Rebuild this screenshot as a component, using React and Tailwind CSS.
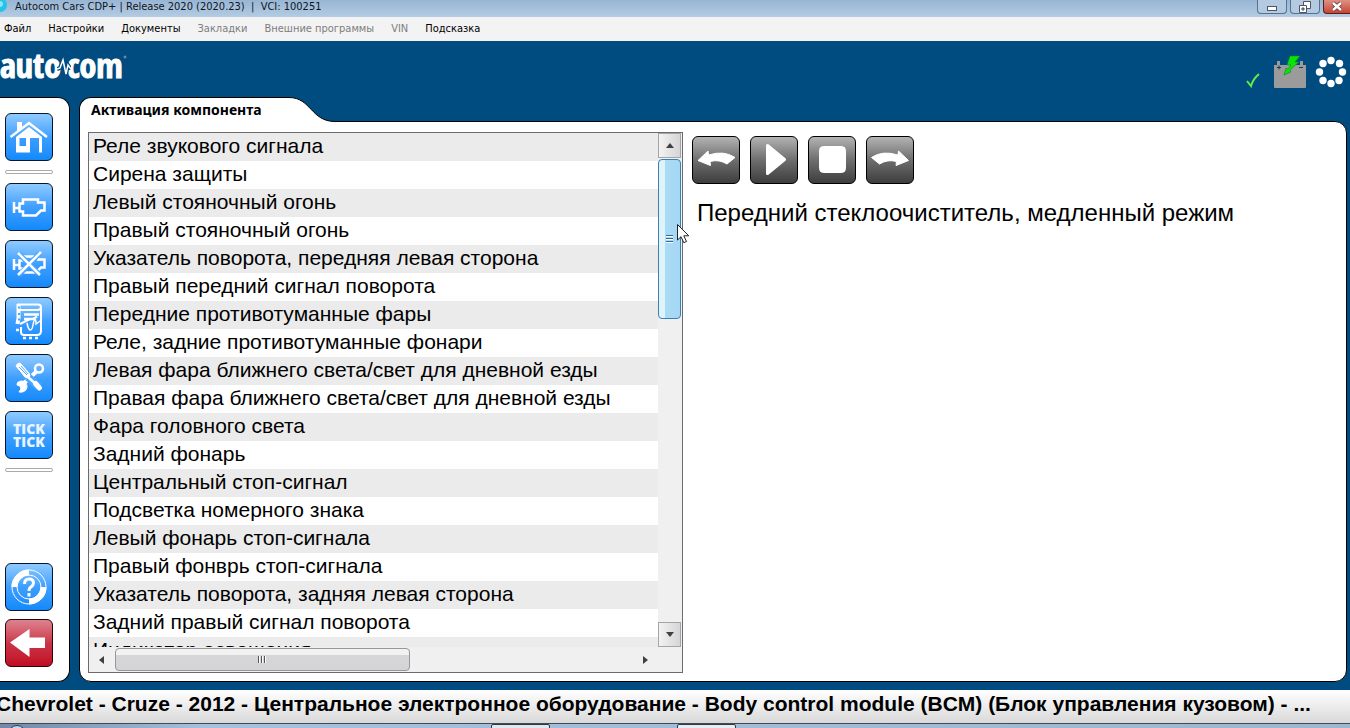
import React, { useState } from 'react';

const MENU = [
  { label: 'Файл' },
  { label: 'Настройки' },
  { label: 'Документы' },
  { label: 'Закладки', disabled: true },
  { label: 'Внешние программы', disabled: true },
  { label: 'VIN', disabled: true },
  { label: 'Подсказка' },
];

const COMPONENTS = [
  'Реле звукового сигнала',
  'Сирена защиты',
  'Левый стояночный огонь',
  'Правый стояночный огонь',
  'Указатель поворота, передняя левая сторона',
  'Правый передний сигнал поворота',
  'Передние противотуманные фары',
  'Реле, задние противотуманные фонари',
  'Левая фара ближнего света/свет для дневной езды',
  'Правая фара ближнего света/свет для дневной езды',
  'Фара головного света',
  'Задний фонарь',
  'Центральный стоп-сигнал',
  'Подсветка номерного знака',
  'Левый фонарь стоп-сигнала',
  'Правый фонврь стоп-сигнала',
  'Указатель поворота, задняя левая сторона',
  'Задний правый сигнал поворота',
  'Индикатор освещения',
];

const ENGINE = 'M8 18v11M8 24h6M17 15.500h15v3h6.500v8H35l-5 5H17v-4h-3.500v-8H17z';

function TitleBar() {
  return (
    <header className="flex h-[17px] shrink-0 items-start justify-between overflow-hidden bg-gradient-to-b from-[#98b5d4] to-[#b3cce3]">
      <div className="flex items-start">
        <svg viewBox="0 0 15 14" className="h-[14px] w-[15px]">
          <circle cx="0" cy="5" r="7" fill="#22c4ea" />
          <circle cx="0" cy="4" r="3" fill="#8be6f8" />
        </svg>
        <h1 className="whitespace-pre font-['DejaVu_Sans_Condensed','DejaVu_Sans',sans-serif] text-[11px] leading-[13px] text-[#10151c]">
          Autocom Cars CDP+ | Release 2020 (2020.23)  |  VCI: 100251
        </h1>
      </div>
      <div className="flex gap-[3px]">
        <button aria-label="Свернуть" className="flex h-[14px] w-[30px] items-center justify-center rounded-b border border-t-0 border-[#56718f] bg-[#b4cae1]">
          <svg viewBox="0 0 12 12" className="size-3"><rect x="1.500" y="5.500" width="9" height="4" fill="#fff" stroke="#4c5766" /></svg>
        </button>
        <button aria-label="Восстановить" className="flex h-[14px] w-[30px] items-center justify-center rounded-b border border-t-0 border-[#56718f] bg-[#b4cae1]">
          <svg viewBox="0 0 12 12" className="size-3" fill="#fff" stroke="#4c5766">
            <path d="M4.500 .5h7v7h-7z" />
            <path d="M.5 4.500h7v7h-7zM3 7h2v2H3z" fillRule="evenodd" />
          </svg>
        </button>
        <button aria-label="Закрыть" className="flex h-[14px] w-[27px] items-center justify-center rounded-bl border border-t-0 border-r-0 border-[#5a1d1a] bg-gradient-to-b from-[#dc9184] to-[#c64331]">
          <svg viewBox="0 0 12 12" className="size-3"><path d="M2 2l8 7M10 2l-8 7" stroke="#5c3535" strokeWidth="4" /><path d="M2 2l8 7M10 2l-8 7" stroke="#fff" strokeWidth="2.500" /></svg>
        </button>
      </div>
    </header>
  );
}

function MenuBar() {
  return (
    <nav className="flex h-6 shrink-0 items-center gap-[17px] bg-[#f3f3f3] pl-1 font-['DejaVu_Sans_Condensed','DejaVu_Sans',sans-serif] text-[11px]">
      {MENU.map((item) => (
        <button key={item.label} disabled={item.disabled} className="text-black disabled:text-[#7d7d7d]">
          {item.label}
        </button>
      ))}
    </nav>
  );
}

function Brand() {
  return (
    <div className="flex shrink-0 items-center self-start pt-2 font-['Open_Sans_Condensed','Liberation_Sans_Narrow','Liberation_Sans',sans-serif] text-[34px] leading-8 font-bold text-white [-webkit-text-stroke:1px_white]">
      <span>auto</span>
      <svg viewBox="0 0 14 20" className="z-10 -mx-1 mt-1 h-5 w-[14px]" fill="none">
        <path d="M0 12l3-1 3-8 3 14 2-9 3 4" stroke="#004c80" strokeWidth="4" />
        <path d="M0 12l3-1 3-8 3 14 2-9 3 4" stroke="#fff" strokeWidth="1.500" />
      </svg>
      <span>com</span>
      <svg viewBox="0 0 4 4" className="mb-4 size-1"><circle cx="2" cy="2" r="1" fill="none" stroke="#9cc3e0" strokeWidth=".7" /></svg>
    </div>
  );
}

function StatusIcons() {
  return (
    <div className="flex items-center gap-2 pt-[6px] pr-[3px]">
      <svg viewBox="0 0 16 16" className="mt-4 size-4"><path d="M2 9l4 5Q8 7 14 2" fill="none" stroke="#5df04a" strokeWidth="2" /></svg>
      <svg viewBox="0 0 34 34" className="ml-1 size-[34px]">
        <path d="M1 10h3V6h3v4h20V6h3v4h3v22q0 1-1 1H2q-1 0-1-1z" fill="#9b9b9b" />
        <path d="M4 12.500h4M6 10.500v4M26 12.500h4" stroke="#22394a" />
        <path d="M17 1h10l-5 6h4l-9 8 1 2-7 3 2-7 2 1 3-4h-4z" fill="#08e408" stroke="#087b20" strokeWidth=".5" />
      </svg>
      <svg viewBox="0 0 32 32" className="size-8" fill="#fff">
        <circle cx="16" cy="4.500" r="3.700" /><circle cx="24.500" cy="7.500" r="3.700" />
        <circle cx="27.500" cy="16" r="3.700" /><circle cx="24" cy="24.500" r="3.700" />
        <circle cx="16" cy="27.500" r="3.700" /><circle cx="8" cy="24.500" r="3.700" />
        <circle cx="4.500" cy="16" r="3.700" /><circle cx="8" cy="7.500" r="3.700" />
      </svg>
    </div>
  );
}

function SideButton({ label, red, children }) {
  return (
    <button
      aria-label={label}
      className={
        red
          ? 'flex size-12 items-center justify-center rounded-md border border-[#2b0508] bg-gradient-to-b from-[#dc8290] via-[#cb3349] to-[#c10a20]'
          : 'flex size-12 items-center justify-center rounded-md border border-[#06162c] bg-gradient-to-b from-[#8fcaff] via-[#3d9fff] to-[#1189fb]'
      }
    >
      {children}
    </button>
  );
}

function Icon({ children }) {
  return (
    <svg viewBox="0 0 46 46" className="size-full" fill="none" stroke="#fff" strokeWidth="3">
      {children}
    </svg>
  );
}

function Divider() {
  return <hr className="h-1 w-12 rounded-full border border-[#aaaaaa] bg-white" />;
}

function Sidebar() {
  return (
    <aside className="flex w-[70px] shrink-0 flex-col rounded-r-xl border border-l-0 border-black bg-white pt-[15px] pb-[14px] pl-[5px]">
      <div className="flex flex-col gap-[9px]">
        <SideButton label="Главная">
          <Icon>
            <path d="M4.500 23L23 9l18 14" strokeWidth="2.500" />
            <path d="M11 8h5v5l-5 4z" fill="#fff" stroke="none" />
            <path d="M23 13L10 23v15.500h14V24h9v14.500h3V23zM13.500 24h6.500v8h-6.500z" fill="#fff" fillRule="evenodd" stroke="none" />
          </Icon>
        </SideButton>
        <Divider />
        <SideButton label="Двигатель">
          <Icon><path d={ENGINE} strokeWidth="2.500" /></Icon>
        </SideButton>
        <SideButton label="Стирание ошибок">
          <Icon>
            <path d={ENGINE} strokeWidth="2.500" />
            <path d="M13 13l20 20M34 12L13 34" stroke="#48a5ff" strokeWidth="5" />
            <path d="M12 12l22 22M35 11L12 34" strokeWidth="2.500" />
          </Icon>
        </SideButton>
        <SideButton label="Данные">
          <Icon>
            <path d="M12 6.500h20q3 0 3 2.500t-3 3H12z" strokeWidth="2" />
            <path d="M12.500 6v14l-1 6" strokeWidth="4" />
            <path d="M35 10v23q0 4-4 4H18q-3 0-3-3v-5" strokeWidth="2" />
            <path d="M18 16.500h15M18 21h9l4-2.500" strokeWidth="2.500" />
            <path d="M14 26l10-5" strokeWidth="2" />
            <path d="M21 25c2 10 5 8 6 2s3-8 3-1l4-3" strokeWidth="1.500" />
            <path d="M17 40h3M23 40h3M29 40h3M10 32h3" strokeWidth="2.500" />
            <path d="M13 8.500v2M13 15v2M13 20.500v2" stroke="#4ca7ff" strokeWidth="2" />
          </Icon>
        </SideButton>
        <SideButton label="Инструменты">
          <Icon>
            <path d="M17 29L30 17" strokeWidth="4" />
            <circle cx="33" cy="13.500" r="4" strokeWidth="2.500" />
            <path d="M11 30l3 1 1 3-2 3q7 1 8-5 0-6-6-6-5 1-4 4z" fill="#fff" strokeWidth="1" />
            <path d="M14 14l8 8M22 22l11 10" stroke="#4ba6ff" strokeWidth="8" />
            <path d="M10 11q1-3 4-3l9 10 1 3-2 2-3-1z" fill="#fff" strokeWidth="1" />
            <path d="M13 12l8 8M15 11l7 8" stroke="#58acff" strokeWidth="1" />
            <path d="M22 22l10 9" strokeWidth="2.500" />
            <path d="M29.500 28.500l4 4.500" strokeWidth="5" strokeLinecap="round" />
          </Icon>
        </SideButton>
        <SideButton label="Tick Tick">
          <span className="font-['Open_Sans','Noto_Sans',sans-serif] text-[14px] leading-[13px] font-extrabold text-[#e8f5ff]">
            TICK<br />TICK
          </span>
        </SideButton>
        <Divider />
      </div>
      <div className="mt-auto flex flex-col gap-2">
        <SideButton label="Справка">
          <Icon>
            <circle cx="23" cy="23" r="17" strokeWidth="1" />
            <circle cx="23" cy="23" r="12" strokeWidth="1" />
            <path d="M8.500 23A14.500 14.500 0 0 1 23 8.500M37.500 23A14.500 14.500 0 0 1 23 37.500" strokeWidth="6" />
            <path d="M18.500 20q0-5 4.500-5t4.500 4q0 2-2.500 4-2 1-2 4M23 29v3.500" strokeWidth="3" />
          </Icon>
        </SideButton>
        <SideButton label="Назад" red>
          <Icon><path d="M4 22.500L23.500 9v8.500H39v10.500H23.500v9z" fill="#fff" stroke="none" /></Icon>
        </SideButton>
      </div>
    </aside>
  );
}

function ComponentList({ selected, onSelect }) {
  return (
    <section className="flex w-[47.6%] shrink-0 border border-[#6b6b6b] bg-[#f0f0f0]">
      <div className="flex min-w-0 flex-1 flex-col">
        <ul className="min-h-0 flex-1 overflow-hidden bg-white">
          {COMPONENTS.map((name) => (
            <li key={name} className="h-7 odd:bg-[#ebebeb]">
              <button
                aria-pressed={selected === name}
                onClick={() => onSelect(name)}
                className="block w-full pl-1 text-left text-[21px] leading-[26px] whitespace-nowrap text-black"
              >
                {name}
              </button>
            </li>
          ))}
        </ul>
        <div className="flex h-[25px] shrink-0 items-center">
          <button aria-label="Влево" className="flex w-[26px] justify-center">
            <svg viewBox="0 0 6 8" className="h-2 w-[6px]"><path d="M5 0v8L0 4z" fill="#404040" /></svg>
          </button>
          <div className="flex-1">
            <div className="flex h-[23px] w-[57%] items-center justify-center gap-px rounded-sm border border-[#979797] bg-gradient-to-b from-[#f2f2f2] from-30% via-[#d6d6d8] via-30% to-[#d4d4d6]">
              <i className="h-[7px] w-[2px] border-l border-[#555] bg-white" />
              <i className="h-[7px] w-[2px] border-l border-[#555] bg-white" />
              <i className="h-[7px] w-[2px] border-l border-[#555] bg-white" />
            </div>
          </div>
          <button aria-label="Вправо" className="flex w-[26px] justify-center">
            <svg viewBox="0 0 6 8" className="h-2 w-[6px]"><path d="M1 0v8l5-4z" fill="#404040" /></svg>
          </button>
        </div>
      </div>
      <div className="flex w-6 shrink-0 flex-col pr-px pb-[25px]">
        <button aria-label="Вверх" className="flex h-[25px] shrink-0 items-center justify-center border border-[#a5a5a5] bg-gradient-to-r from-[#f3f3f3] to-[#d5d5d8]">
          <svg viewBox="0 0 8 5" className="h-[5px] w-2"><path d="M0 5h8L4 0z" fill="#404040" /></svg>
        </button>
        <div className="flex-1 pt-px">
          <div className="relative flex h-[160px] flex-col items-center justify-center gap-px rounded-sm border border-[#3c7fb1] bg-gradient-to-r from-[#dff3fc] from-30% via-[#a9dbf5] via-30% to-[#a5d8f3]">
            <i className="h-[2px] w-[7px] border-t border-[#2e6a94] bg-white" />
            <i className="h-[2px] w-[7px] border-t border-[#2e6a94] bg-white" />
            <i className="h-[2px] w-[7px] border-t border-[#2e6a94] bg-white" />
            <svg viewBox="0 0 12 20" className="absolute top-16 left-[18px] z-10 h-5 w-3">
              <path d="M.5 .5v15.500l3.500-3.300 2.800 6 2.700-1.200-2.700-5.700h5z" fill="#fff" stroke="#222" />
            </svg>
          </div>
        </div>
        <button aria-label="Вниз" className="flex h-[25px] shrink-0 items-center justify-center border border-[#a5a5a5] bg-gradient-to-r from-[#f3f3f3] to-[#d5d5d8]">
          <svg viewBox="0 0 8 5" className="h-[5px] w-2"><path d="M0 0h8L4 5z" fill="#404040" /></svg>
        </button>
      </div>
    </section>
  );
}

function ControlButton({ label, children }) {
  return (
    <button aria-label={label} className="size-12 rounded-md border border-black bg-gradient-to-b from-[#b4b4b4] via-[#6e6e6e] via-50% to-[#3e3e3e]">
      <svg viewBox="0 0 46 46" className="size-full" fill="#fff" stroke="#fff" strokeLinejoin="round">
        {children}
      </svg>
    </button>
  );
}

function Panel() {
  const [selected, setSelected] = useState(null);

  return (
    <main className="flex min-w-0 flex-1 flex-col">
      <div className="z-10 -mb-px flex h-[25px] shrink-0">
        <h2 className="w-[210px] rounded-tl-xl border-t border-l border-black bg-white pl-[11px] font-['Noto_Sans','Open_Sans',sans-serif] text-[14px] leading-6 font-bold whitespace-nowrap text-black">
          Активация компонента
        </h2>
        <svg viewBox="0 0 46 25" className="h-[25px] w-[46px]">
          <path d="M0 .5C22 .5 22 24.500 46 24.500V25H0z" fill="#fff" />
          <path d="M0 .5C22 .5 22 24.500 46 24.500" fill="none" stroke="#000" />
        </svg>
      </div>
      <div className="flex min-h-0 flex-1 gap-[9px] rounded-xl rounded-tl-none border border-black bg-white px-2 pt-[10px] pb-2">
        <ComponentList selected={selected} onSelect={setSelected} />
        <section className="min-w-0 flex-1 pt-1">
          <div className="flex gap-[10px]">
            <ControlButton label="Предыдущий">
              <path d="M5 23.500L15 14l.5 4Q31 13 42 20.500L34 27Q26 22 17 24.500l.5 4z" />
            </ControlButton>
            <ControlButton label="Пуск">
              <path d="M16.500 8.500v28L33.500 22.500z" strokeWidth="3" />
            </ControlButton>
            <ControlButton label="Стоп">
              <rect x="10.500" y="9.500" width="26" height="26" rx="4" />
            </ControlButton>
            <ControlButton label="Следующий">
              <path d="M41.500 23.500L31.500 14l-.5 4Q15.500 13 4.500 20.500L12.500 27Q20.500 22 29.500 24.500l-.5 4z" />
            </ControlButton>
          </div>
          <p className="mt-[15px] ml-[5px] text-[24px] leading-7 text-black">Передний стеклоочиститель, медленный режим</p>
        </section>
      </div>
    </main>
  );
}

// Only the top edge of the taskbar is visible below the status line
function Taskbar() {
  return (
    <div className="flex h-[5px] justify-between overflow-hidden border-t border-[#3f4b57] bg-gradient-to-r from-[#7388a8] via-[#a6c0de] via-15% to-[#9fb6cf] pl-2">
      <span className="mt-px h-6 w-[18px] rounded-full border border-[#243a58] bg-[#c3d8ea]" />
      <div className="flex w-[64%] gap-[127px]">
        <span className="h-[5px] w-[59px] rounded-t-xs border border-[#2e3b49] bg-[#dfe8ee]" />
        <span className="h-[5px] w-[59px] rounded-t-xs border border-[#2e3b49] bg-[#e6eef3]" />
      </div>
    </div>
  );
}

export default function App() {
  return (
    <div className="flex h-screen flex-col overflow-hidden bg-[#004c80] font-['Liberation_Sans',Arial,sans-serif]">
      <TitleBar />
      <MenuBar />
      <div className="flex h-14 shrink-0 items-center justify-between">
        <Brand />
        <StatusIcons />
      </div>
      <div className="flex min-h-0 flex-1 gap-[9px] pr-[3px]">
        <Sidebar />
        <Panel />
      </div>
      <footer className="mt-2 shrink-0">
        <p className="-ml-1 overflow-hidden bg-gradient-to-b from-white to-[#d9d9d9] pb-[5px] text-[21px] leading-7 font-bold whitespace-nowrap text-black">
          Chevrolet - Cruze - 2012 - Центральное электронное оборудование - Body control module (BCM) (Блок управления кузовом) - ...
        </p>
        <Taskbar />
      </footer>
    </div>
  );
}
